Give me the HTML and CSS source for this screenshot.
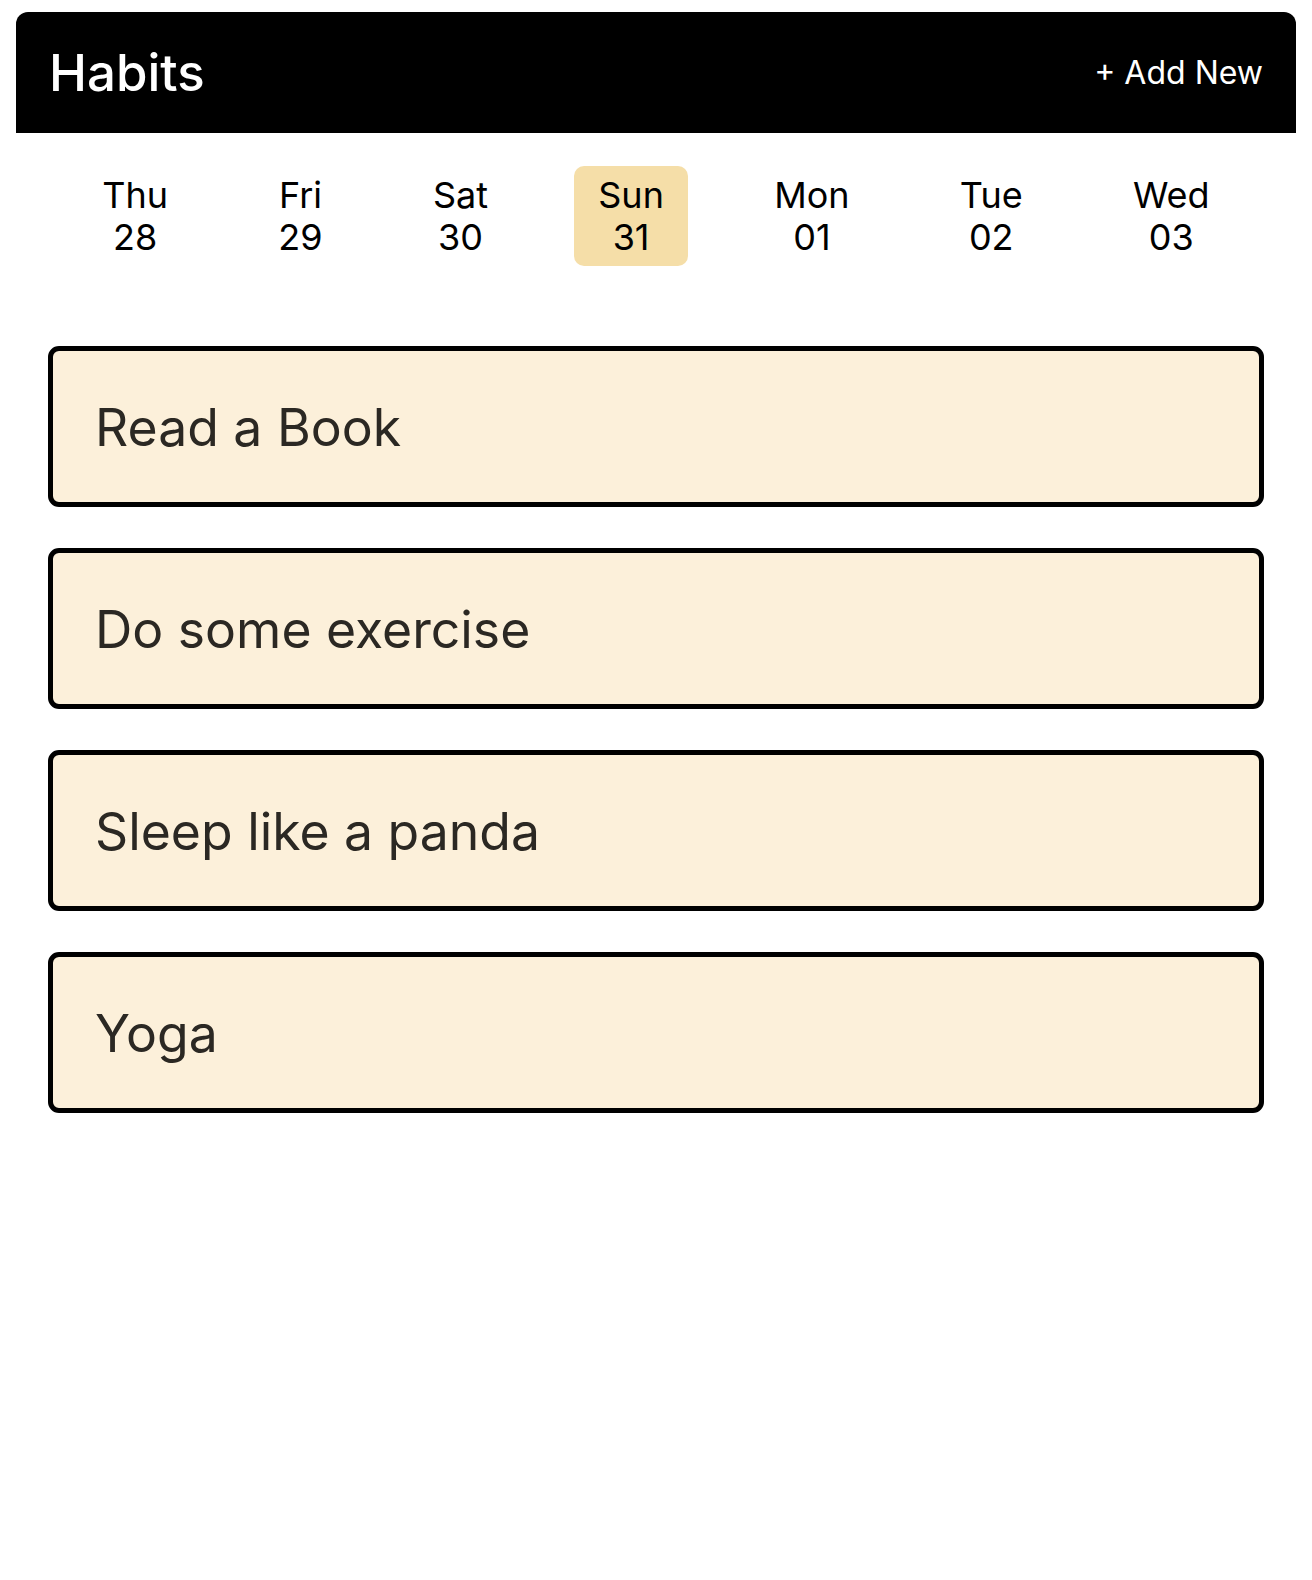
FILE: index.html
```html
<!DOCTYPE html>
<html lang="en">
  <head>
    <meta charset="UTF-8" />
    <meta name="viewport" content="width=device-width, initial-scale=1.0" />
    <title>Habits</title>
    <link rel="stylesheet" href="styles.css">
  </head>
  <body>
    <header class="topbar">
      <h1 class="topbar-title">Habits</h1>
      <button class="add-btn">+ Add New</button>
    </header>

    <nav class="days">
      <div class="day"><span>Thu</span><span>28</span></div>
      <div class="day"><span>Fri</span><span>29</span></div>
      <div class="day"><span>Sat</span><span>30</span></div>
      <div class="day active"><span>Sun</span><span>31</span></div>
      <div class="day"><span>Mon</span><span>01</span></div>
      <div class="day"><span>Tue</span><span>02</span></div>
      <div class="day"><span>Wed</span><span>03</span></div>
    </nav>

    <main class="habit-list">
      <div class="habit-card">Read a Book</div>
      <div class="habit-card">Do some exercise</div>
      <div class="habit-card">Sleep like a panda</div>
      <div class="habit-card">Yoga</div>
    </main>
  </body>
</html>
```

FILE: styles.css
```css
body {
  font-family: Inter, "Noto Sans", Arial, sans-serif;
  background-color: #fff;
  color: #000;
  margin: 0;
  padding: 0;
}

.topbar {
  display: flex;
  align-items: center;
  justify-content: space-between;
  background-color: #000;
  color: white;
  height: 121px;
  margin: 12px 16px 0;
  padding: 0 33px;
  border-radius: 12px 12px 0 0;
  box-sizing: border-box;
}

.topbar-title {
  margin: 0;
  font-size: 51px;
  font-weight: 500;
}

.add-btn {
  background: none;
  border: none;
  color: white;
  font-family: inherit;
  font-size: 32px;
  padding: 0;
  cursor: pointer;
}

.days {
  display: flex;
  justify-content: space-evenly;
  margin: 33px 16px 0;
}

.day {
  display: flex;
  flex-direction: column;
  align-items: center;
  padding: 8px 24px;
  font-size: 36px;
  line-height: 42px;
  border-radius: 10px;
  cursor: pointer;
}

.day.active {
  background-color: #f5dea8;
}

.habit-list {
  display: flex;
  flex-direction: column;
  gap: 41px;
  margin: 80px 48px 0;
}

.habit-card {
  display: flex;
  align-items: center;
  height: 161px;
  box-sizing: border-box;
  padding: 0 42px;
  background-color: #fcf0da;
  border: 5px solid #000;
  border-radius: 11px;
  font-size: 51.7px;
  color: #2b2823;
}
```
